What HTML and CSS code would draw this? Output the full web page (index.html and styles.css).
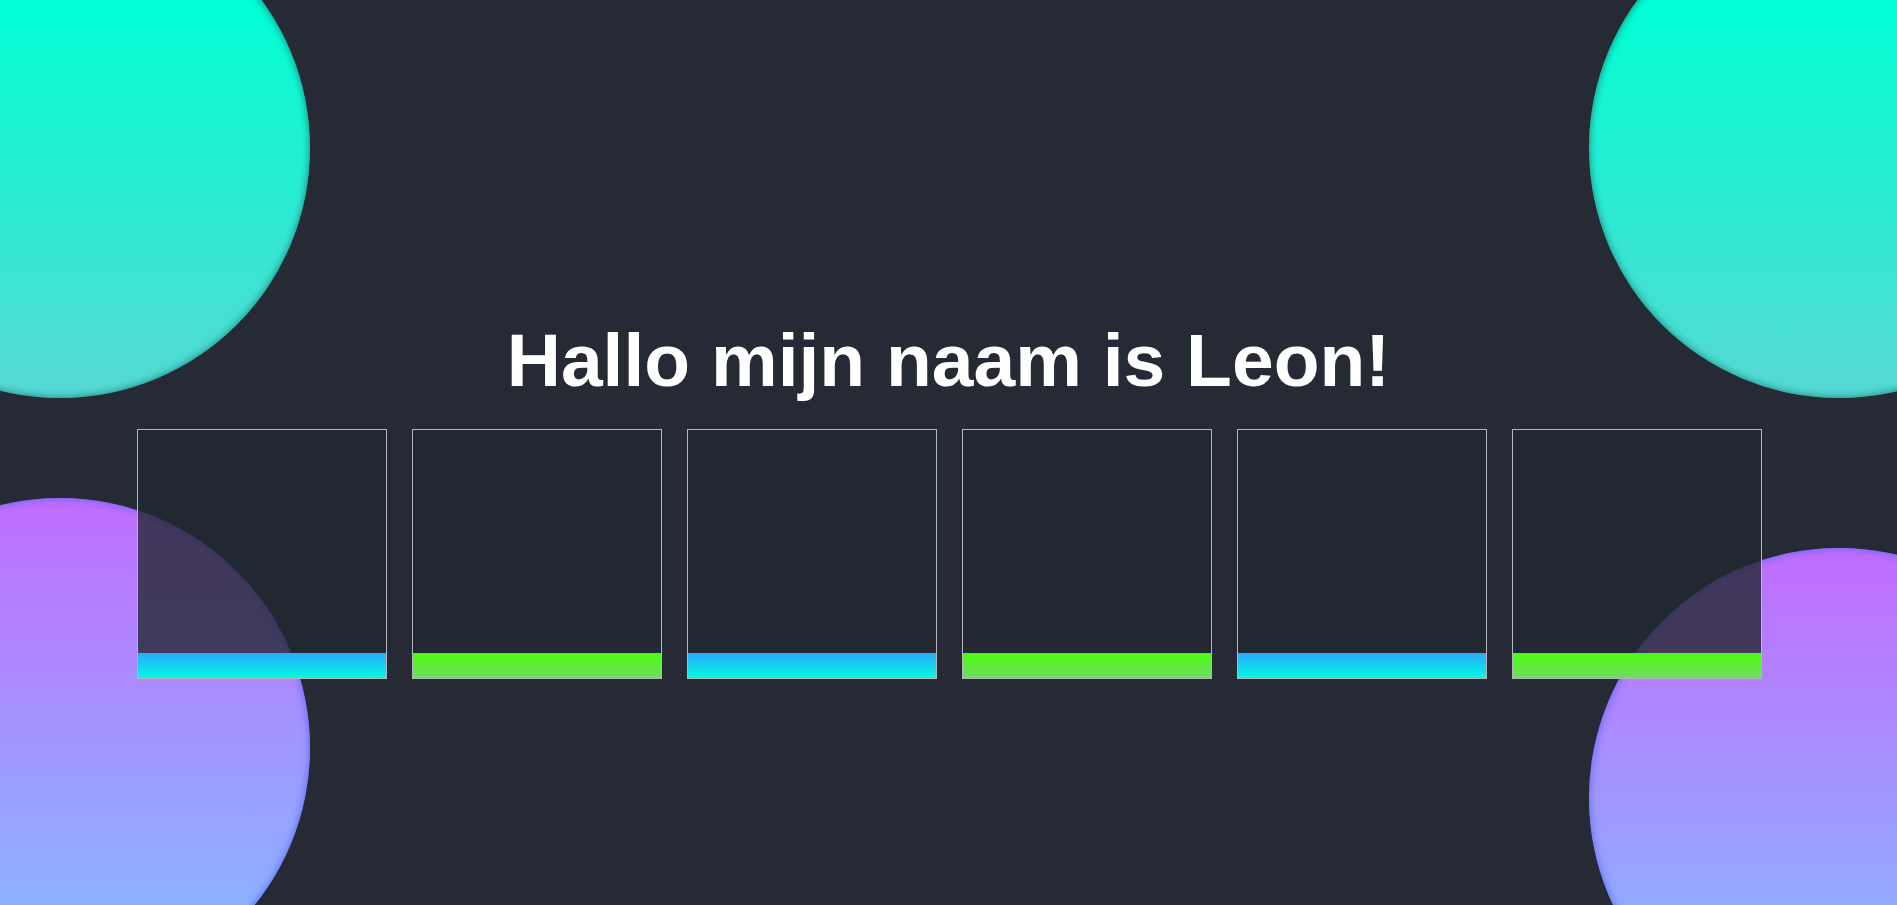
FILE: index.html
```html
<!DOCTYPE html>
<html lang="nl">
<head>
<meta charset="utf-8">
<title>Leon</title>
<link rel="stylesheet" href="styles.css">
</head>
<body>
<div class="stage">
  <div class="blob blob-tl"></div>
  <div class="blob blob-tr"></div>
  <div class="blob blob-bl"></div>
  <div class="blob blob-br"></div>
  <main class="content">
    <h1 class="title">Hallo mijn naam is Leon!</h1>
    <div class="cards">
      <div class="card"><div class="bar bar-blue"></div></div>
      <div class="card"><div class="bar bar-green"></div></div>
      <div class="card"><div class="bar bar-blue"></div></div>
      <div class="card"><div class="bar bar-green"></div></div>
      <div class="card"><div class="bar bar-blue"></div></div>
      <div class="card"><div class="bar bar-green"></div></div>
    </div>
  </main>
</div>
</body>
</html>
```

FILE: styles.css
```css
html, body {
  margin: 0;
  padding: 0;
  height: 100%;
  overflow: hidden;
}
body {
  background: #262a35;
  font-family: "Liberation Sans", Arial, sans-serif;
}
.stage {
  position: relative;
  width: 100%;
  height: 100vh;
  overflow: hidden;
}
.blob {
  position: absolute;
  width: 500px;
  height: 500px;
  border-radius: 50%;
  z-index: 0;
}
.blob-tl, .blob-tr {
  background: linear-gradient(180deg, #00ffd5 20%, #56d8d3 100%);
  box-shadow: inset 0 0 7px 1px rgba(20, 120, 110, 0.75);
}
.blob-bl, .blob-br {
  background: linear-gradient(180deg, #c26cff 0%, #7ec2ff 100%);
  box-shadow: inset 0 0 7px 1px rgba(90, 100, 255, 0.85);
}
.blob-tl { left: -190px; top: -102px; }
.blob-tr { left: 1589px; top: -102px; }
.blob-bl { left: -190px; top: 498px; }
.blob-br { left: 1589px; top: 548px; }

.content {
  position: relative;
  z-index: 1;
  display: flex;
  flex-direction: column;
  align-items: center;
  padding-top: 323px;
}
.title {
  margin: 0 0 31px;
  color: #ffffff;
  font-size: 75px;
  line-height: 75px;
  font-weight: 700;
  text-align: center;
}
.cards {
  display: flex;
  gap: 25px;
  padding-left: 1px;
}
.card {
  width: 248px;
  height: 248px;
  border: 1px solid #b3b6bd;
  background: rgba(33, 39, 48, 0.79);
  display: flex;
  flex-direction: column;
  justify-content: flex-end;
}
.bar {
  height: 25px;
}
.bar-blue {
  background: linear-gradient(180deg, #2ca9ff 0%, #00fbe0 100%);
}
.bar-green {
  background: linear-gradient(180deg, #4bfc0f 0%, #72dc64 100%);
}
```
